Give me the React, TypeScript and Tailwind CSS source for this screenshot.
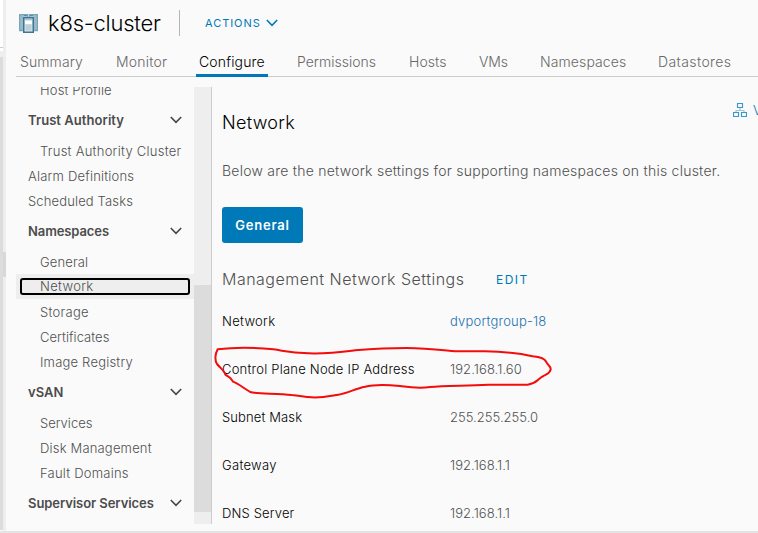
import type { ReactNode } from "react";

const tabs = [
  { label: "Summary", cls: "ml-1 w-[96px] tracking-[0.1px]" },
  { label: "Monitor", cls: "w-[83px] tracking-[0.2px]" },
  { label: "Configure", cls: "w-[98px] tracking-[0.15px]", active: true },
  { label: "Permissions", cls: "w-[112px]" },
  { label: "Hosts", cls: "w-[70px] tracking-[0.05px]" },
  { label: "VMs", cls: "w-[61px] tracking-[-0.1px]" },
  { label: "Namespaces", cls: "w-[118px] tracking-[0.1px]" },
  { label: "Datastores", cls: "w-[90px] tracking-[0.4px]" },
];

function Chevron({ className }: { className: string }) {
  return (
    <svg className={className} width="12" height="8" viewBox="0 0 12 8" fill="none" stroke="currentColor" strokeWidth="1.6">
      <path d="M0.8 1 L6 6.4 L11.2 1" />
    </svg>
  );
}

function ClusterIcon() {
  return (
    <svg width="19" height="19" viewBox="0 0 19 19" fill="none">
      <path d="M0.75 0.75H8.5V16.5H0.75ZM10.5 0.75H18.25V16.5H10.5Z" fill="#a9c6d4" stroke="#7ba6ba" strokeWidth="1.5" />
      <path d="M3 2V16M16 2V16" stroke="#88afc1" />
      <path d="M5 1.5H8M11 1.5H14" stroke="#5a8ba3" />
      <rect x="4.75" y="3.75" width="9.5" height="14.5" fill="#dbe6ec" stroke="#3f7591" strokeWidth="1.5" />
      <path d="M6 5.5H13" stroke="#a9c6d4" />
      <rect x="6" y="7" width="7" height="3" fill="#fff" />
      <rect x="6.5" y="10.5" width="6" height="6" fill="#bccfd9" />
    </svg>
  );
}

function Group({ children, cls = "" }: { children: ReactNode; cls?: string }) {
  return (
    <div className="flex h-9 items-center justify-between pr-3 pl-3 font-semibold text-[#4c4c4c]">
      <span className={`pt-[2px] ${cls}`}>{children}</span>
      <Chevron className="text-[#454545]" />
    </div>
  );
}

function Item({ children, cls = "", top = false }: { children: ReactNode; cls?: string; top?: boolean }) {
  return <div className={`flex h-[25px] items-center pt-[2px] ${top ? "pl-3" : "pl-6"} ${cls}`}>{children}</div>;
}

function Row({ label, value, cls = "", valueCls = "" }: { label: string; value: string; cls?: string; valueCls?: string }) {
  return (
    <div className="flex h-12 items-center pt-[2px] text-[13px]">
      <span className={`w-[228px] text-black ${cls}`}>{label}</span>
      <span className={valueCls}>{value}</span>
    </div>
  );
}

export default function App() {
  return (
    <div className="relative flex h-[533px] w-[758px] flex-col overflow-hidden bg-[#fafafa] font-['Inter','Liberation_Sans',sans-serif] text-[13px] font-[340] whitespace-nowrap text-[#505050]">
      <div className="flex min-h-0 flex-1">
        <div className="flex w-[3px] flex-col">
          <div className="h-[47px] bg-white" />
          <div className="h-px bg-[#ccc]" />
          <div className="h-[3px] bg-white" />
          <div className="h-[6px] bg-[#eee]" />
          <div className="h-[473px] bg-[#dcdcdc]" />
        </div>
        <div className="w-[3px] bg-[#eee] pt-[252px]">
          <div className="h-[25px] bg-[#d8d8d8]" />
        </div>

        <div className="flex min-w-0 flex-1 flex-col pl-[10px]">
          <header className="flex h-[46px] shrink-0 items-center pl-[3px]">
            <ClusterIcon />
            <h1 className="ml-[10px] w-[131px] text-[22px] font-light tracking-[-0.22px] text-black">k8s-cluster</h1>
            <div className="h-[26px] w-px bg-[#b5b5b5]" />
            <span className="ml-[25px] w-[61px] text-[11px] font-normal tracking-[0.95px] text-[#0079b8]">ACTIONS</span>
            <Chevron className="text-[#0079b8]" />
          </header>

          <nav className="flex h-[31px] shrink-0 border-b border-[#ccc] text-[14px] text-[#686868]">
            {tabs.map((t) => (
              <div key={t.label} className={`relative h-[31px] shrink-0 leading-[31px] ${t.cls} ${t.active ? "text-black" : ""}`}>
                {t.label}
                {t.active && <div className="absolute bottom-0 -left-[3px] h-[3px] w-[72px] bg-[#0079b8]" />}
              </div>
            ))}
          </nav>

          <div className="mt-[10px] flex h-[437px]">
            <aside className="w-[178px] overflow-hidden">
              <div className="-mt-[10px]">
                <Item cls="tracking-[0.15px]">Host Profile</Item>
                <Group cls="tracking-[0.06px]">Trust Authority</Group>
                <Item cls="tracking-[0.26px]">Trust Authority Cluster</Item>
                <Item top cls="tracking-[0.2px]">Alarm Definitions</Item>
                <Item top cls="tracking-[0.14px]">Scheduled Tasks</Item>
                <Group cls="tracking-[-0.1px]">Namespaces</Group>
                <Item cls="tracking-[0.15px]">General</Item>
                <div className="h-[25px] bg-[#eee] px-1 py-1">
                  <div className="flex h-[17px] items-center rounded-[3px] border-2 border-black pt-px pl-[18px] tracking-[0.32px]">Network</div>
                </div>
                <Item cls="tracking-[0.28px]">Storage</Item>
                <Item cls="tracking-[0.05px]">Certificates</Item>
                <Item cls="tracking-[0.2px]">Image Registry</Item>
                <Group>vSAN</Group>
                <Item>Services</Item>
                <Item cls="tracking-[0.18px]">Disk Management</Item>
                <Item cls="tracking-[0.22px]">Fault Domains</Item>
                <Group cls="tracking-[-0.07px]">Supervisor Services</Group>
              </div>
            </aside>
            <div className="w-[18px] border-r border-[#ccc] bg-[#eee] pt-[198px]">
              <div className="h-[227px] bg-[#dcdcdc]" />
            </div>

            <main className="min-w-0 flex-1 pl-[10px]">
              <div className="flex h-[46px] items-center justify-between">
                <h2 className="mt-[24px] text-[18px] font-light tracking-[0.3px] text-black">Network</h2>
                <div className="flex w-[25px] items-center gap-[6px] text-[13px] text-[#0079b8]">
                  <svg className="shrink-0" width="14" height="14" viewBox="0 0 14 14" fill="none" stroke="#3a97c9" strokeWidth="1.15">
                    <path d="M4.5 0.5h5v4h-5zM0.5 9.5h5v4h-5zM8.5 9.5h5v4h-5z" />
                    <path d="M7 5v2M3 9V7.5h8V9" opacity=".5" />
                  </svg>
                  <span className="shrink-0 pt-px">V</span>
                </div>
              </div>
              <p className="mt-[27px] text-[14px] leading-[22px] tracking-[0.24px]">
                Below are the network settings for supporting namespaces on this cluster.
              </p>
              <button className="mt-[25px] block h-9 w-[81px] rounded-[3px] bg-[#0079b8] pt-[2px] text-[13px] font-semibold tracking-[0.8px] text-white">
                General
              </button>
              <div className="mt-[25px] flex h-[22px] items-center">
                <h3 className="w-[274px] text-[16px] tracking-[0.48px]">Management Network Settings</h3>
                <span className="pt-px text-[12px] font-normal tracking-[1.45px] text-[#0079b8]">EDIT</span>
              </div>
              <div className="mt-[7px]">
                <Row label="Network" value="dvportgroup-18" cls="tracking-[0.3px]" valueCls="tracking-[0.2px] text-[#2271b0]" />
                <Row label="Control Plane Node IP Address" value="192.168.1.60" cls="tracking-[0.22px]" valueCls="tracking-[0.08px]" />
                <Row label="Subnet Mask" value="255.255.255.0" cls="tracking-[0.12px]" valueCls="tracking-[0.02px]" />
                <Row label="Gateway" value="192.168.1.1" cls="tracking-[0.3px]" valueCls="tracking-[0.05px]" />
                <Row label="DNS Server" value="192.168.1.1" cls="tracking-[0.15px]" valueCls="tracking-[0.05px]" />
              </div>
            </main>
          </div>
        </div>
      </div>
      <div className="h-[2px] bg-[#e4e4e4]" />

      <svg className="absolute top-[335px] left-[205px]" width="370" height="70" viewBox="0 0 1110 210" fill="none" stroke="#f40b0b" strokeWidth="6" strokeLinejoin="round">
        <path d="M38 43C95 36 155 38 205 43C240 48 255 54 310 55C365 57 395 53 450 46C500 42 545 39 605 39C660 39 690 43 750 49L840 49C900 50 940 53 983 64C1005 66 1020 72 1024 81C1028 91 1038 93 1037 103C1035 116 1025 116 1012 125C995 135 994 146 968 149L850 149C775 153 720 151 675 156C640 161 615 157 585 153C545 149 505 149 480 155C450 161 430 174 400 179C370 184 350 189 320 187C295 185 285 182 260 180C215 174 160 178 136 171C120 163 100 145 84 140C79 133 78 129 70 125L61 119C59 108 50 103 36 87C28 75 31 56 38 43Z" />
      </svg>
    </div>
  );
}
